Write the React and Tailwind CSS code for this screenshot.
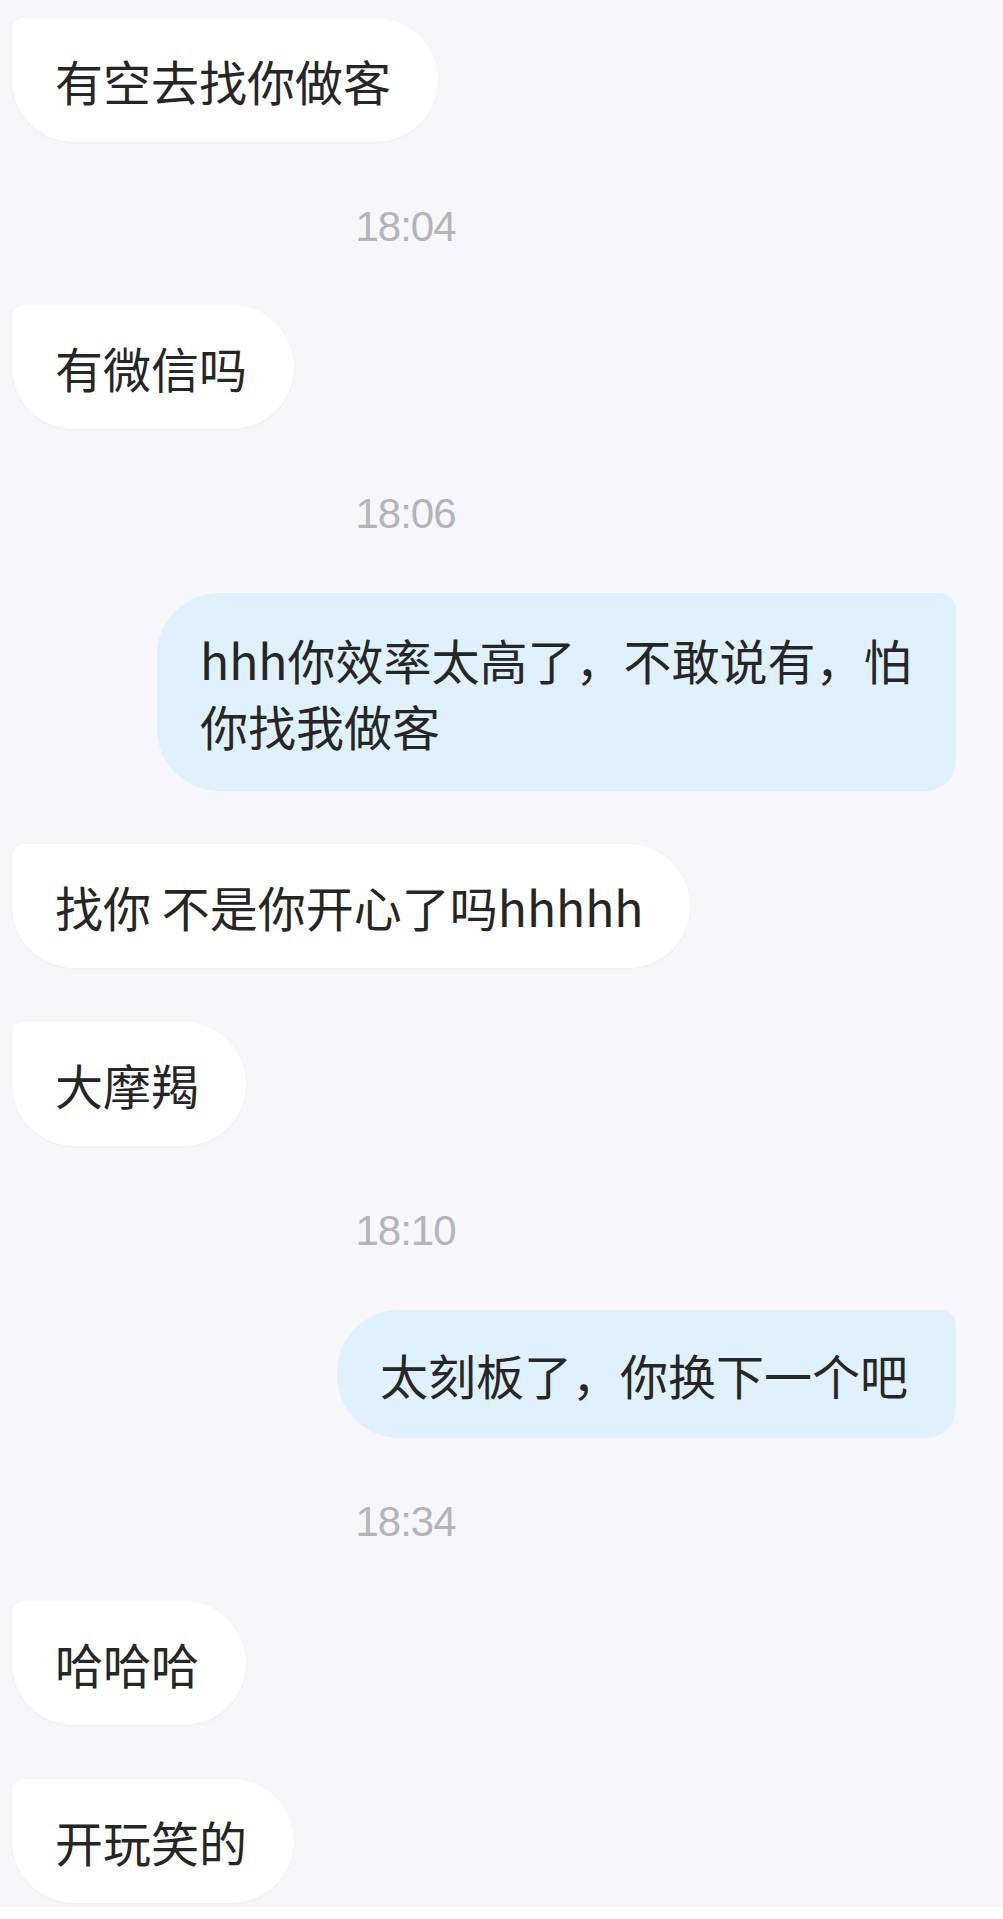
import React from 'react';

const messages = [
  { type: 'in', text: '有空去找你做客' },
  { type: 'time', text: '18:04' },
  { type: 'in', text: '有微信吗' },
  { type: 'time', text: '18:06' },
  { type: 'out', text: 'hhh你效率太高了，不敢说有，怕你找我做客', multi: true },
  { type: 'in', text: '找你 不是你开心了吗hhhhh' },
  { type: 'in', text: '大摩羯' },
  { type: 'time', text: '18:10' },
  { type: 'out', text: '太刻板了，你换下一个吧' },
  { type: 'time', text: '18:34' },
  { type: 'in', text: '哈哈哈' },
  { type: 'in', text: '开玩笑的' },
];

const cjk = { fontFamily: '"Noto Sans CJK SC", "Noto Sans", sans-serif' };

function Bubble({ msg }) {
  if (msg.type === 'time') {
    return (
      <div
        className="flex h-[56px] items-center justify-center pt-[5px] pr-[192px] text-[42px] tracking-[-1px] text-[#b4b4b9]"
        style={{ fontFamily: '"Liberation Sans", Arial, sans-serif' }}
      >
        {msg.text}
      </div>
    );
  }

  if (msg.type === 'out') {
    return (
      <div className="mr-[47px] flex justify-end">
        <div
          className={`rounded-[62px] rounded-tr-[16px] rounded-br-[30px] bg-[#dff1fd] pl-[43px] text-[48px] leading-[66px] text-[#262626] ${
            msg.multi ? 'w-[799px] pr-[40px] py-[33px]' : 'whitespace-nowrap pr-[48px] py-[31px]'
          }`}
          style={cjk}
        >
          {msg.text}
        </div>
      </div>
    );
  }

  return (
    <div className="flex">
      <div
        className="ml-[12px] whitespace-nowrap rounded-[62px] rounded-tl-[12px] bg-white pl-[43px] pr-[47px] py-[29px] text-[48px] leading-[66px] text-[#262626] shadow-[0_1px_3px_rgba(0,0,0,0.04)]"
        style={cjk}
      >
        {msg.text}
      </div>
    </div>
  );
}

export default function App() {
  return (
    <div className="w-[1003px] bg-white">
      <div className="flex flex-col gap-[53.7px] bg-[#f7f7fb] pt-[18px] pb-[4px]">
        {messages.map((m, i) => (
          <Bubble key={i} msg={m} />
        ))}
      </div>
    </div>
  );
}
